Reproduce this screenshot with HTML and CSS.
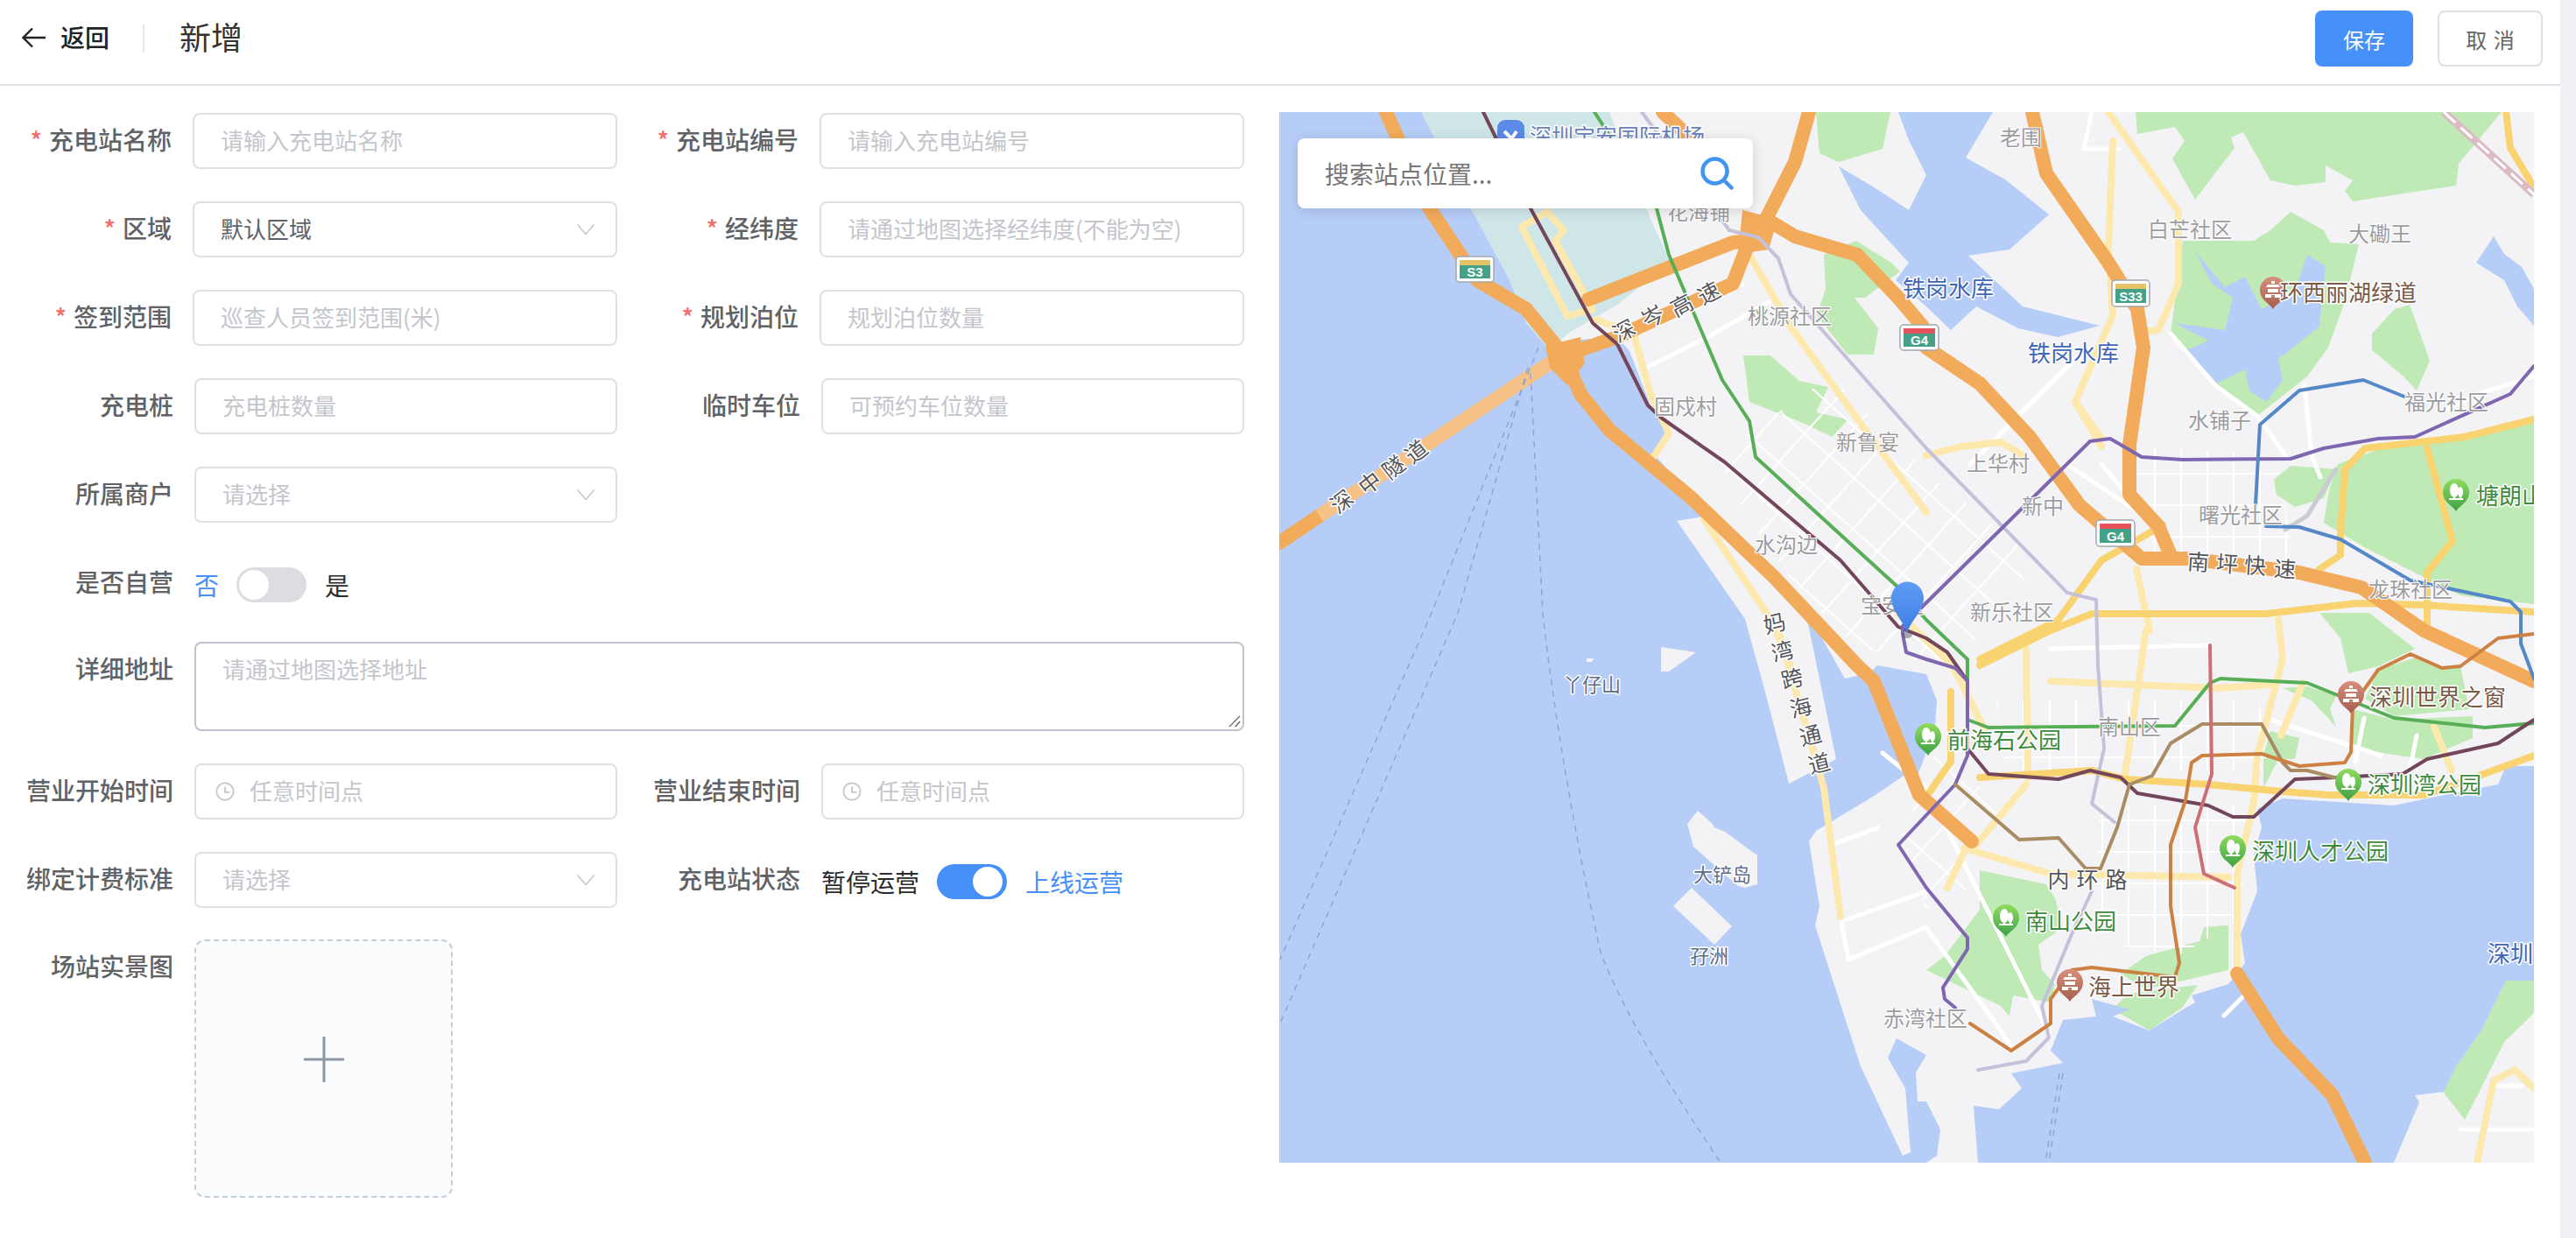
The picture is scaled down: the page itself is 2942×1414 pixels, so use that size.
FILE: index.html
```html
<!DOCTYPE html>
<html lang="zh-CN">
<head>
<meta charset="utf-8">
<title>新增</title>
<link rel="stylesheet" href="styles.css">
</head>
<body>
<div class="page">
  <header class="topbar">
    <svg class="back-arrow" viewBox="0 0 27 24"><path d="M12 1.5 1.5 12 12 22.5M1.5 12H27"/></svg>
    <span class="back-text">返回</span>
    <span class="topbar-divider"></span>
    <h1 class="topbar-title">新增</h1>
    <div class="topbar-actions">
      <button class="btn btn-primary">保存</button>
      <button class="btn btn-default">取 消</button>
    </div>
  </header>
  <main class="content">
    <form class="form">
      <div class="row row-req">
        <div class="field field-a"><label class="label"><i class="star">*</i>充电站名称</label><div class="control ph">请输入充电站名称</div></div>
        <div class="field field-b"><label class="label"><i class="star">*</i>充电站编号</label><div class="control ph">请输入充电站编号</div></div>
      </div>
      <div class="row row-req">
        <div class="field field-a"><label class="label"><i class="star">*</i>区域</label><div class="control control-select val">默认区域<svg class="chevron" viewBox="0 0 20 12"><path d="M.5.5 10 11.5 19.5.5"/></svg></div></div>
        <div class="field field-b"><label class="label"><i class="star">*</i>经纬度</label><div class="control ph">请通过地图选择经纬度(不能为空)</div></div>
      </div>
      <div class="row row-req">
        <div class="field field-a"><label class="label"><i class="star">*</i>签到范围</label><div class="control ph">巡查人员签到范围(米)</div></div>
        <div class="field field-b"><label class="label"><i class="star">*</i>规划泊位</label><div class="control ph">规划泊位数量</div></div>
      </div>
      <div class="row">
        <div class="field field-a"><label class="label">充电桩</label><div class="control ph">充电桩数量</div></div>
        <div class="field field-b"><label class="label">临时车位</label><div class="control ph">可预约车位数量</div></div>
      </div>
      <div class="row">
        <div class="field field-a"><label class="label">所属商户</label><div class="control control-select ph">请选择<svg class="chevron" viewBox="0 0 20 12"><path d="M.5.5 10 11.5 19.5.5"/></svg></div></div>
      </div>
      <div class="row">
        <div class="field field-a"><label class="label">是否自营</label>
          <div class="switch-group">
            <span class="sw-text sw-on">否</span><span class="switch"><span class="knob"></span></span><span class="sw-text">是</span>
          </div>
        </div>
      </div>
      <div class="row row-textarea">
        <div class="field field-full"><label class="label">详细地址</label>
          <div class="control control-area ph">请通过地图选择地址
            <svg class="grip" viewBox="0 0 16 16"><path d="M1 15 15 1M9 15 15 8"/></svg>
          </div>
        </div>
      </div>
      <div class="row">
        <div class="field field-a"><label class="label">营业开始时间</label><div class="control control-time ph"><svg class="clock" viewBox="0 0 24 24"><circle cx="12" cy="12" r="10.500"/><path d="M12 6v7h6"/></svg>任意时间点</div></div>
        <div class="field field-b"><label class="label">营业结束时间</label><div class="control control-time ph"><svg class="clock" viewBox="0 0 24 24"><circle cx="12" cy="12" r="10.500"/><path d="M12 6v7h6"/></svg>任意时间点</div></div>
      </div>
      <div class="row">
        <div class="field field-a"><label class="label">绑定计费标准</label><div class="control control-select ph">请选择<svg class="chevron" viewBox="0 0 20 12"><path d="M.5.5 10 11.5 19.5.5"/></svg></div></div>
        <div class="field field-b"><label class="label">充电站状态</label>
          <div class="switch-group switch-group-b">
            <span class="sw-text">暂停运营</span><span class="switch switch-on"><span class="knob"></span></span><span class="sw-text sw-on">上线运营</span>
          </div>
        </div>
      </div>
      <div class="row row-upload">
        <div class="field field-full"><label class="label">场站实景图</label>
          <div class="upload"><svg class="plus" viewBox="0 0 46 52"><path d="M23 1v50M1 26h44"/></svg></div>
        </div>
      </div>
    </form>

    <section class="map">
      <svg class="map-svg" viewBox="1461 128 1433 1200" preserveAspectRatio="none">
        <defs>
          <pattern id="meshA" width="38" height="44" patternUnits="userSpaceOnUse" patternTransform="rotate(42)">
            <path d="M0 0H38M0 0V44" class="mesh"/>
          </pattern>
          <pattern id="meshB" width="30" height="36" patternUnits="userSpaceOnUse">
            <path d="M0 0H30M0 0V36" class="mesh"/>
          </pattern>
          <linearGradient id="gGreen" x1="0" y1="0" x2="0" y2="1"><stop offset="0" stop-color="#8fdc5f"/><stop offset="1" stop-color="#3fa047"/></linearGradient>
          <linearGradient id="gBrown" x1="0" y1="0" x2="0" y2="1"><stop offset="0" stop-color="#d98f7c"/><stop offset="1" stop-color="#a45c4c"/></linearGradient>
          <linearGradient id="gBlue" x1="0" y1="0" x2="0" y2="1"><stop offset="0" stop-color="#5f9bf6"/><stop offset="1" stop-color="#3c7ee2"/></linearGradient>
          <symbol id="pinGreen" viewBox="0 0 30 37">
            <path d="M15 37C12 31 0 27 0 15A15 15 0 1 1 30 15C30 27 18 31 15 37Z" fill="url(#gGreen)"/>
            <ellipse cx="13" cy="13" rx="5" ry="8" fill="#fff"/><ellipse cx="20" cy="15" rx="3" ry="6" fill="#fff"/>
            <path d="M7 23H23" stroke="#fff" stroke-width="2"/><path d="M13 15V23M20 17V23" stroke="#fff" stroke-width="2"/>
          </symbol>
          <symbol id="pinBrown" viewBox="0 0 30 37">
            <path d="M15 37C12 31 0 27 0 15A15 15 0 1 1 30 15C30 27 18 31 15 37Z" fill="url(#gBrown)"/>
            <path d="M7 12H23L21 9H9ZM9 14H21V18H9ZM6 20H24V24H6Z" fill="#fff"/><path d="M13 5H17V8H13Z" fill="#fff"/><path d="M13 21H17V24H13Z" fill="#c4806f"/>
          </symbol>
        </defs>

        <rect class="land" x="1461" y="128" width="1433" height="1200"/>

        <!-- parks -->
        <polygon class="green" points="2439,128 2441,153 2484,145 2495,161 2481,181 2507,228 2552,169 2548,157 2562,151 2593,206 2621,212 2656,208 2656,189 2687,206 2678,218 2687,230 2805,212 2808,187 2857,128"/>
        <polygon class="green" points="2616,242 2654,263 2661,277 2694,279 2678,344 2659,397 2635,430 2578,475 2531,438 2479,381 2493,275 2574,275 2593,263"/>
        <polygon class="green" points="2709,381 2735,353 2752,348 2775,412 2760,446 2745,430 2709,400"/>
        <polygon class="green" points="2670,530 2720,512 2800,500 2894,480 2894,690 2810,680 2700,625 2654,597 2660,560"/>
        <polygon class="green" points="2597,548 2616,532 2668,536 2654,569 2621,579 2600,565"/>
        <polygon class="green" points="2074,128 2159,128 2150,170 2100,185 2078,175"/>
        <polygon class="green" points="2083,291 2120,275 2160,300 2170,310 2130,340 2118,340 2145,375 2140,405 2110,405 2075,360 2085,330"/>
        <polygon class="green" points="1991,406 2022,406 2055,435 2088,442 2074,471 2111,479 2092,499 2059,483 1998,459"/>
        <polygon class="green" points="2862,1120 2894,1120 2894,1157 2860,1190 2835,1240 2815,1279 2790,1247 2805,1218 2834,1177"/>
        <polygon class="green" points="2261,994 2337,1010 2347,1026 2356,1059 2328,1079 2332,1108 2347,1124 2342,1145 2299,1137 2295,1161 2285,1149 2200,1108 2221,1092 2261,1039"/>
        <polygon class="green" points="2540,1057 2517,1059 2512,1075 2451,1092 2422,1112 2450,1130 2545,1108 2545,1057"/>
        <polygon class="green" points="2413,1153 2455,1177 2493,1150 2510,1125 2430,1135"/>
        <polygon class="green" points="2687,810 2734,822 2824,818 2824,843 2768,867 2687,855"/>
        <polygon class="green" points="2716,765 2758,751 2787,763 2810,761 2820,810 2734,818 2701,798"/>
        <polygon class="green" points="2649,700 2706,700 2758,741 2716,761 2682,769 2673,729"/>
        <polygon class="green" points="2607,786 2635,784 2668,794 2661,810 2668,830 2640,800"/>
        <polygon class="green" points="2593,835 2626,843 2621,867 2602,867 2585,900 2585,863"/>

        <!-- airport -->
        <polygon class="apron" points="1623,128 1682,242 1724,320 1743,369 1771,401 1790,381 1847,348 1908,300 1885,250 1838,128"/>

        <!-- water -->
        <path class="water" d="M1461 128H1623L1682 242 1724 320 1743 369 1771 401 1790 389 1847 385 1861 401 1885 463 1906 487 1892 522 1951 589 1915 595 1993 707 2017 794 2043 895 2097 867 2064 708 2055 695 2078 724 2107 775 2135 769 2144 760 2200 770 2212 800 2210 830 2200 860 2190 885 2177 884 2142 908 2074 949 2066 961 2078 1035 2073 1057 2125 1218 2173 1320 2182 1316 2176 1243 2156 1208 2166 1186 2200 1205 2188 1225 2190 1258 2200 1258 2216 1290 2200 1328H1461Z"/>
        <path class="water" d="M2259 1328 2254 1263 2283 1267 2309 1243 2297 1226 2356 1214 2342 1200 2356 1165 2394 1161 2389 1141 2432 1153 2413 1161 2455 1177 2493 1153 2507 1145 2503 1137 2545 1124 2564 1100 2559 1067 2578 1018 2574 977 2583 945 2578 924 2607 912 2734 920 2791 908 2853 896 2862 875H2894V1120H2862L2834 1177 2805 1218 2791 1247 2758 1251 2763 1259 2734 1328Z"/>
        <path class="water" d="M2168 128H2276L2245 180 2290 205 2340 245 2295 285 2248 292 2310 350 2398 372 2350 385 2305 375 2257 350 2228 377 2200 350 2165 320 2180 300 2125 240 2100 190 2142 215 2180 240 2200 200 2180 160Z"/>
        <path class="water" d="M2848 270 2860 290 2880 305 2894 330V372L2875 350 2860 320 2828 300Z"/>
        <path class="water" d="M2507 287 2541 328 2564 316 2583 353 2621 332 2635 291 2656 304 2649 373 2602 410 2607 434 2588 459 2569 446 2564 422 2531 438 2493 402 2522 389 2484 369 2541 377 2550 340 2526 324Z"/>
        <polygon class="water" points="2205,1290 2216,1290 2212,1320 2200,1328"/>

        <!-- islands -->
        <polygon class="land" points="1897,739 1937,745 1906,767 1897,767"/>
        <polygon class="land" points="1812,752 1820,752 1818,756 1812,756"/>
        <polygon class="land" points="1939,926 1927,941 1934,967 1985,1012 1993,1014 2007,1010 2007,977 1970,950 1958,945 1955,940"/>
        <polygon class="land" points="1932,1014 1911,1035 1958,1079 1978,1058"/>

        <!-- street mesh -->
        <polygon fill="url(#meshA)" points="1960,520 2090,430 2200,540 2330,640 2230,760 2120,740 2060,680 2000,600"/>
        <polygon fill="url(#meshA)" points="2210,860 2290,920 2260,1010 2200,1040 2170,960"/>
        <polygon fill="url(#meshB)" points="2400,920 2565,920 2560,1050 2490,1090 2420,1080 2390,1020"/>
        <polygon fill="url(#meshB)" points="2440,510 2600,520 2620,640 2440,640"/>
        <polygon fill="url(#meshB)" points="2280,800 2580,800 2590,880 2290,880"/>

        <!-- white roads -->
        <g class="rd-white">
          <polyline points="2479,381 2530,440 2578,475 2610,520"/>
          <polyline points="2632,440 2640,520 2650,545"/>
          <polyline points="2342,741 2522,737"/>
          <polyline points="2593,822 2720,863"/>
          <polyline points="2092,965 2145,945"/>
          <polyline points="2111,1096 2200,1059"/>
          <polyline points="2107,1051 2200,1018"/>
          <polyline points="2102,1047 2111,1096"/>
          <polyline points="2150,860 2200,900 2300,1100 2340,1180"/>
          <polyline points="2200,1060 2280,1170 2300,1200"/>
          <polyline points="2389,128 2380,170 2420,170"/>
          <polyline points="2700,820 2690,870"/>
          <polyline points="2760,840 2750,890"/>
          <polyline points="2830,1328 2848,1240 2880,1240"/>
          <polyline points="2810,1290 2894,1290"/>
          <polyline points="2540,1160 2570,1130 2555,1112"/>
          <polyline points="1895,370 1950,345 1990,325"/>
          <polyline points="1880,420 1950,385 2020,345"/>
          <polyline points="2400,530 2450,590 2360,530"/>
          <polyline points="2250,530 2320,460 2380,400"/>
          <polyline points="2790,470 2830,450 2894,430"/>
        </g>

        <!-- pale secondary roads -->
        <g class="rd-pale">
          <polyline points="2408,128 2488,242 2488,324 2465,377 2440,380"/>
          <polyline points="2413,161 2408,283 2413,360 2370,459 2399,499"/>
          <polyline points="1998,291 2045,373 2107,459 2200,585"/>
          <polyline points="1738,259 1767,242 1786,263 1776,275 1819,353 1790,361 1738,259"/>
          <polyline points="1823,365 1866,381 1885,450 1906,495 1887,524"/>
          <polyline points="1946,593 2022,707 2045,760"/>
          <polyline points="2342,778 2531,786 2593,782"/>
          <polyline points="2314,741 2316,888"/>
          <polyline points="2451,720 2427,884"/>
          <polyline points="2243,969 2342,998 2545,1002"/>
          <polyline points="2247,965 2224,1014"/>
          <polyline points="2314,896 2257,965"/>
          <polyline points="2602,708 2607,753 2578,863 2574,916 2555,998 2555,1108"/>
          <polyline points="2200,520 2240,510 2285,505 2310,520"/>
          <polyline points="2440,650 2455,720"/>
          <polyline points="2829,1328 2848,1234 2872,1222 2894,1243"/>
          <polyline points="2630,780 2605,840"/>
          <polyline points="2780,830 2800,880"/>
          <polyline points="2370,459 2400,510"/>
          <polyline points="2167,700 2230,760 2270,840"/>
          <polyline points="2031,720 2083,900 2102,1047"/>
        </g>

        <!-- main yellow roads -->
        <g class="rd-yellow">
          <polyline points="2261,760 2342,720 2389,701 2588,701 2692,689 2767,691 2894,699"/>
          <polyline points="2894,479 2815,499 2701,512 2678,536 2673,610 2673,634 2649,650"/>
          <polyline points="2772,512 2801,618 2772,654 2772,712"/>
          <polyline points="2261,888 2389,880 2427,890 2522,896 2607,904 2659,908 2768,908 2815,892 2894,863"/>
          <polyline points="2261,753 2351,708"/>
          <polyline points="2228,790 2228,870 2200,910"/>
          <polyline points="2862,128 2867,169 2894,214"/>
          <polyline points="2342,720 2400,640 2470,600"/>
        </g>

        <!-- railway -->
        <polyline class="rail-base" points="2791,128 2894,222"/>
        <polyline class="rail-dash" points="2791,128 2894,222"/>
        <polyline class="rail-gray" points="2668,536 2635,589 2610,605"/>

        <!-- expressways -->
        <g class="rd-express">
          <polyline points="1583,128 1630,234 1687,320 1743,353 1786,406 1805,450 1838,491 1932,569 2026,659 2121,760 2140,778 2163,835 2192,908 2252,961"/>
          <polyline points="1461,620 1507,589"/>
          <polyline points="1786,406 1847,385 1979,324 1998,275 2017,250 2050,185 2066,128"/>
          <polyline points="1814,342 1979,277 1998,275"/>
          <polyline points="2017,250 2050,270 2121,291 2168,340 2196,373 2200,397 2261,438 2318,499 2375,577 2446,638 2498,638 2626,654 2697,671 2768,720 2829,748 2894,778"/>
          <polyline points="2321,128 2337,198 2408,300 2441,353 2448,397 2432,508 2432,565 2465,601 2479,634"/>
          <polyline points="2555,1112 2602,1186 2664,1251 2701,1328"/>
          <polyline points="1899,128 1934,161"/>
        </g>
        <polyline class="rd-tunnel" points="1507,589 1771,414"/>
        <polygon class="rd-junction" points="1765,395 1805,385 1810,415 1790,440 1770,420"/>
        <polygon class="rd-junction" points="1990,240 2030,250 2020,285 1985,290"/>

        <!-- metro lines -->
        <polyline class="m m-lav" points="1875,128 1975,263 2008,271 2031,295 2045,336 2200,512 2361,677 2394,685 2396,760 2403,855 2389,918 2415,939"/>
        <polyline class="m m-lav" points="2389,1018 2366,1067 2332,1149 2340,1185 2314,1212 2259,1222"/>
        <polyline class="m m-green" points="1821,128 1892,238 1906,291 1967,434 1998,481 2005,522 2168,671 2200,708 2247,753 2247,822 2271,831 2484,829 2524,780 2536,775 2635,780 2734,820 2838,831 2894,826"/>
        <polyline class="m m-maroon" points="1694,128 1748,238 1819,369 1847,393 1882,463 1897,477 1970,528 2102,640 2168,716 2200,729 2224,745 2247,778 2247,855 2271,884 2351,890 2387,880 2422,888 2441,906 2522,920 2550,933 2574,933 2621,890 2668,888 2744,884 2772,867 2853,849 2894,822"/>
        <polyline class="m m-purple" points="2894,418 2867,450 2758,499 2716,501 2654,512 2616,524 2493,525 2446,522 2410,501 2387,504 2173,715 2173,724 2177,745 2200,753 2233,763 2247,778 2247,863 2233,896 2168,965 2200,1014 2247,1071 2247,1084 2219,1128 2221,1141 2233,1151"/>
        <polyline class="m m-blue" points="2746,453 2699,434 2626,446 2581,485 2576,577"/>
        <polyline class="m m-blue" points="2588,601 2626,602 2673,616 2753,663 2867,687 2879,699 2879,735 2894,775"/>
        <polyline class="m m-tan" points="2233,896 2306,959 2351,957 2382,992 2399,992 2418,945 2432,896 2458,886 2479,849 2515,827 2583,827 2607,871 2616,880 2635,880 2666,888"/>
        <polyline class="m m-orange" points="2894,724 2853,729 2810,761 2789,763 2753,747 2716,765 2687,806 2685,859 2678,871 2626,875 2583,861 2515,863 2503,871 2496,914 2479,965 2479,1035 2489,1100 2484,1116 2389,1105 2366,1108 2342,1141 2342,1169 2297,1200 2250,1169"/>
        <polyline class="m m-pink" points="2524,737 2526,884 2507,945 2517,998 2552,1014"/>

        <!-- shipping lanes -->
        <g class="lane">
          <polyline points="1757,397 1635,700 1462,1096"/>
          <polyline points="1745,420 1665,700 1462,1169"/>
          <path d="M1748 426 1762 700C1775 820 1800 960 1828 1088 1860 1170 1920 1260 1965 1328"/>
          <polyline points="2356,1226 2340,1328"/>
          <polyline points="2352,1226 2336,1328"/>
        </g>

        <!-- road shields -->
        <g class="shield">
          <rect class="sh-bg" x="1663" y="293" width="43" height="29" rx="4"/><rect class="sh-y" x="1667" y="297" width="35" height="6"/><rect class="sh-t" x="1667" y="303" width="35" height="15"/><text class="sh-text" x="1684.5" y="316">S3</text>
          <rect class="sh-bg" x="2412" y="320" width="43" height="30" rx="4"/><rect class="sh-y" x="2416" y="324" width="35" height="6"/><rect class="sh-t" x="2416" y="330" width="35" height="16"/><text class="sh-text" x="2433.5" y="344">S33</text>
          <rect class="sh-bg" x="2170" y="371" width="44" height="29" rx="4"/><rect class="sh-r" x="2174" y="375" width="36" height="6"/><rect class="sh-t" x="2174" y="381" width="36" height="15"/><text class="sh-text" x="2192" y="394">G4</text>
          <rect class="sh-bg" x="2394" y="594" width="44" height="30" rx="4"/><rect class="sh-r" x="2398" y="598" width="36" height="6"/><rect class="sh-t" x="2398" y="604" width="36" height="16"/><text class="sh-text" x="2416" y="618">G4</text>
        </g>

        <!-- place names -->
        <g class="t-area">
          <text x="2284" y="166">老围</text>
          <text x="2453" y="271">白芒社区</text>
          <text x="2682" y="276">大磡王</text>
          <text x="2499" y="489">水铺子</text>
          <text x="2746" y="468">福光社区</text>
          <text x="2246" y="538">上华村</text>
          <text x="2309" y="587">新中</text>
          <text x="2511" y="597">曙光社区</text>
          <text x="2705" y="682">龙珠社区</text>
          <text x="2250" y="708">新乐社区</text>
          <text x="1996" y="370">桃源社区</text>
          <text x="1889" y="473">固戍村</text>
          <text x="2097" y="514">新鲁宴</text>
          <text x="2004" y="631">水沟边</text>
          <text x="2125" y="700">宝安区</text>
          <text x="2396" y="839">南山区</text>
          <text x="2151" y="1172">赤湾社区</text>
          <text x="1904" y="251">花海铺</text>
        </g>
        <text class="t-blue" x="2173" y="339">铁岗水库</text>
        <text class="t-blue" x="2316" y="413">铁岗水库</text>
        <text class="t-blue" x="2841" y="1099">深圳</text>
        <text class="t-blue t-air" x="1747" y="165">深圳宝安国际机场</text>
        <rect class="air-pin" x="1710" y="137" width="31" height="38" rx="9"/>
        <path class="air-plane" d="M1718 150 1734 166M1722 165 1732 150"/>
        <g class="t-sea">
          <text x="1785" y="790">丫仔山</text>
          <text x="1934" y="1007">大铲岛</text>
          <text x="1930" y="1100">孖洲</text>
        </g>

        <!-- road names -->
        <g class="t-road">
          <text transform="translate(1859 386) rotate(-28)">深</text>
          <text transform="translate(1892 370) rotate(-28)">岑</text>
          <text transform="translate(1925 357) rotate(-28)">高</text>
          <text transform="translate(1956 343) rotate(-28)">速</text>
          <text transform="translate(1538 580) rotate(-38)">深</text>
          <text transform="translate(1570 559) rotate(-38)">中</text>
          <text transform="translate(1597 541) rotate(-38)">隧</text>
          <text transform="translate(1623 523) rotate(-38)">道</text>
          <text transform="translate(2510 651) rotate(4)">南</text>
          <text transform="translate(2543 653) rotate(4)">坪</text>
          <text transform="translate(2575 655) rotate(4)">快</text>
          <text transform="translate(2609 659) rotate(4)">速</text>
          <text transform="translate(2029 721) rotate(-14)">妈</text>
          <text transform="translate(2038 753) rotate(-14)">湾</text>
          <text transform="translate(2049 784) rotate(-14)">跨</text>
          <text transform="translate(2059 817) rotate(-14)">海</text>
          <text transform="translate(2070 849) rotate(-14)">通</text>
          <text transform="translate(2080 881) rotate(-14)">道</text>
          <text transform="translate(2351 1014)">内</text>
          <text transform="translate(2384 1014)">环</text>
          <text transform="translate(2417 1014)">路</text>
        </g>

        <!-- points of interest -->
        <use href="#pinBrown" x="2581" y="316" width="30" height="37"/>
        <text class="t-poi-b" x="2604" y="344">环西丽湖绿道</text>
        <use href="#pinGreen" x="2790" y="547" width="30" height="37"/>
        <text class="t-poi-g" x="2828" y="576">塘朗山</text>
        <use href="#pinGreen" x="2187" y="826" width="30" height="37"/>
        <text class="t-poi-g" x="2224" y="855">前海石公园</text>
        <use href="#pinBrown" x="2670" y="778" width="30" height="37"/>
        <text class="t-poi-b" x="2706" y="806">深圳世界之窗</text>
        <use href="#pinGreen" x="2667" y="878" width="30" height="37"/>
        <text class="t-poi-g" x="2704" y="906">深圳湾公园</text>
        <use href="#pinGreen" x="2535" y="954" width="30" height="37"/>
        <text class="t-poi-g" x="2572" y="982">深圳人才公园</text>
        <use href="#pinGreen" x="2276" y="1033" width="30" height="37"/>
        <text class="t-poi-g" x="2313" y="1062">南山公园</text>
        <use href="#pinBrown" x="2349" y="1107" width="30" height="37"/>
        <text class="t-poi-b" x="2385" y="1137">海上世界</text>

        <!-- selected location -->
        <ellipse class="marker-shadow" cx="2178" cy="725" rx="6" ry="4"/>
        <path class="marker" d="M2178 724C2175 710 2160 698 2160 683A18.500 18.500 0 1 1 2197 683C2197 698 2181 710 2178 724Z"/>
      </svg>
      <div class="map-search">
        <span class="map-search-text">搜索站点位置...</span>
        <svg class="map-search-icon" viewBox="0 0 38 38"><circle cx="16.500" cy="16.500" r="14"/><path d="M27 27 35.500 35.500"/></svg>
      </div>
    </section>
  </main>
</div>
</body>
</html>
```
FILE: styles.css
```css
* { box-sizing: border-box; }
html, body { margin: 0; height: 100%; }
body {
  background: #f0f1f6;
  font-family: "Noto Sans CJK SC", "Noto Sans", sans-serif;
  overflow: hidden;
}
.page { width: 2924px; height: 1414px; background: #fff; }

/* top bar */
.topbar {
  height: 98px;
  display: flex;
  align-items: center;
  padding: 0 20px 8px 25px;
  border-bottom: 2px solid #e0e0e6;
}
.back-arrow { width: 27px; height: 24px; margin-bottom: 2px; fill: none; stroke: #222; stroke-width: 2.400; }
.back-text { margin: 0 0 4px 17px; font-size: 28px; font-weight: 500; color: #222; }
.topbar-divider { width: 2px; height: 32px; margin-left: 38px; background: #e8e8ec; }
.topbar-title { margin: 0 0 6px 40px; font-size: 36px; font-weight: 400; color: #333; }
.topbar-actions { margin-left: auto; display: flex; gap: 28px; }
.btn {
  height: 64px;
  border-radius: 8px;
  font-family: inherit;
  font-size: 24px;
  padding: 0;
}
.btn-primary { width: 112px; background: #4690f9; border: 0; color: #fff; }
.btn-default { width: 120px; background: #fff; border: 2px solid #dfe0e6; color: #666; word-spacing: 2px; }

/* content */
.content { display: flex; align-items: flex-start; padding-top: 30px; }
.form {
  width: 1421px;
  flex: none;
  padding-top: 1px;
  display: flex;
  flex-direction: column;
  gap: 37px;
}
.row { display: flex; height: 64px; }
.row-textarea { height: 102px; margin-top: -2px; }
.row-upload { height: 295px; margin-top: -1px; }
.field { display: flex; }
.field-a { width: 705px; }
.field-b { width: 716px; }
.field-full { width: 1421px; }
.label {
  flex: none;
  width: 222px;
  padding-right: 24px;
  text-align: right;
  font-size: 28px;
  font-weight: 500;
  line-height: 61px;
  color: #606266;
}
.field-b .label { width: 233px; }
.row-req .label { width: 220px; }
.row-req .field-b .label { width: 231px; }
.star {
  font-style: normal;
  color: #f56c6c;
  margin-right: 8px;
  font-size: 28px;
}

.control {
  flex: 1;
  height: 64px;
  border: 2px solid #dfe0e6;
  border-radius: 8px;
  padding: 0 30px;
  font-size: 26px;
  line-height: 58px;
  background: #fff;
}
.ph { color: #c4c6cc; }
.val { color: #606266; }
.control-select { display: flex; align-items: center; justify-content: space-between; padding: 0 24px 3px 30px; }
.chevron { width: 20px; height: 12px; margin-top: 3px; fill: none; stroke: #c2c4cc; stroke-width: 1.400; }
.control-time { display: flex; align-items: center; padding: 0 30px 3px 22px; }
.clock { width: 22px; height: 22px; margin: 3px 17px 0 0; fill: none; stroke: #c4c6cc; stroke-width: 2; }
.control-area {
  height: 102px;
  border-color: #bfc3cb;
  position: relative;
}
.grip { position: absolute; right: 2px; bottom: 2px; width: 14px; height: 14px; fill: none; stroke: #555; stroke-width: 1.400; }

.switch-group { display: flex; align-items: center; height: 64px; padding-top: 4px; }
.sw-text { font-size: 28px; color: #2b2b2b; }
.sw-on { color: #4690f9; }
.switch {
  width: 80px;
  height: 40px;
  margin: 0 21px 0 20px;
  padding: 3px;
  border-radius: 20px;
  background: #dcdde2;
  display: flex;
}
.knob { width: 34px; height: 34px; border-radius: 50%; background: #fff; }
.switch-on { background: #4690f9; justify-content: flex-end; }
.switch-on .knob { margin-right: 2px; }

.upload {
  width: 295px;
  height: 295px;
  border: 2px dashed #c4cfdc;
  border-radius: 12px;
  background: #fbfcfe;
  display: flex;
  align-items: center;
  justify-content: center;
  padding-bottom: 22px;
}
.plus { width: 46px; height: 52px; fill: none; stroke: #8c95a3; stroke-width: 3; stroke-linecap: round; }

/* map */
.map {
  position: relative;
  width: 1433px;
  height: 1200px;
  margin-left: 40px;
  overflow: hidden;
  flex: none;
}
.map-svg { display: block; width: 1433px; height: 1200px; font-family: "Noto Sans CJK SC", sans-serif; }
.map-search {
  position: absolute;
  left: 21px;
  top: 30px;
  width: 520px;
  height: 80px;
  background: #fff;
  border-radius: 8px;
  box-shadow: 0 2px 14px rgba(0, 0, 0, .14);
  display: flex;
  align-items: center;
  justify-content: space-between;
  padding: 0 22px 0 31px;
}
.map-search-text { font-size: 28px; color: #777; }
.map-search-icon { width: 38px; height: 38px; fill: none; stroke: #3f95f0; stroke-width: 4.500; stroke-linecap: round; }

/* map layers */
.land { fill: #f3f3f5; }
.water { fill: #b6cdf8; }
.green { fill: #bfe9b5; }
.apron { fill: #cfe6e8; }
.mesh { fill: none; stroke: #fff; stroke-width: 4; }
polyline { fill: none; stroke-linejoin: round; stroke-linecap: round; }
.rd-white polyline { stroke: #fff; stroke-width: 5; }
.rd-pale polyline { stroke: #fde9ae; stroke-width: 8; }
.rd-yellow polyline { stroke: #f9d36f; stroke-width: 8; }
.rd-express polyline { stroke: #f2ab5a; stroke-width: 16; }
.rd-tunnel { stroke: #f6c287; stroke-width: 16; stroke-linecap: butt; }
.rd-junction { fill: #f2ab5a; }
.rail-base { stroke: #dcbac2; stroke-width: 9; stroke-linecap: butt; }
.rail-dash { stroke: #fff; stroke-width: 3; stroke-dasharray: 18 8; stroke-linecap: butt; }
.rail-gray { stroke: #c9ccd3; stroke-width: 5; }
.m { stroke-width: 4; }
.m-lav { stroke: #c4c1db; }
.m-green { stroke: #57ae57; }
.m-maroon { stroke: #74465a; }
.m-purple { stroke: #7e66b0; }
.m-blue { stroke: #5588c8; }
.m-tan { stroke: #aa8c64; }
.m-orange { stroke: #cc8142; }
.m-pink { stroke: #cf6e74; }
.lane polyline, .lane path { fill: none; stroke: #8fa5d6; stroke-width: 1.500; stroke-dasharray: 7 6; stroke-linecap: butt; }
.sh-bg { fill: #fff; stroke: #a3a8ad; stroke-width: 1.500; }
.sh-y { fill: #e4c467; }
.sh-r { fill: #e6535a; }
.sh-t { fill: #43a188; }
.sh-text { fill: #fff; font-family: "Liberation Sans", sans-serif; font-size: 15px; font-weight: 700; text-anchor: middle; }
.t-area text, .t-blue, .t-sea text, .t-road text, .t-poi-b, .t-poi-g {
  paint-order: stroke;
  stroke: #fff;
  stroke-linejoin: round;
}
.t-area text { font-size: 24px; fill: #9c9c9f; stroke-width: 2px; }
.t-blue { font-size: 26px; fill: #3f66b8; stroke-width: 3px; }
.t-air { fill: #6a82bd; font-size: 25px; }
.t-sea text { font-size: 22px; fill: #5c6b8a; stroke-width: 3px; }
.t-road text { font-size: 25px; fill: #55555c; stroke-width: 3px; text-anchor: middle; }
.t-poi-b { font-size: 26px; fill: #7b5a45; stroke-width: 3px; }
.t-poi-g { font-size: 26px; fill: #3e8a3c; stroke-width: 3px; }
.air-pin { fill: #5b8be6; }
.air-plane { fill: none; stroke: #fff; stroke-width: 4; }
.marker { fill: url(#gBlue); }
.marker-shadow { fill: rgba(80, 80, 90, .45); }
```
